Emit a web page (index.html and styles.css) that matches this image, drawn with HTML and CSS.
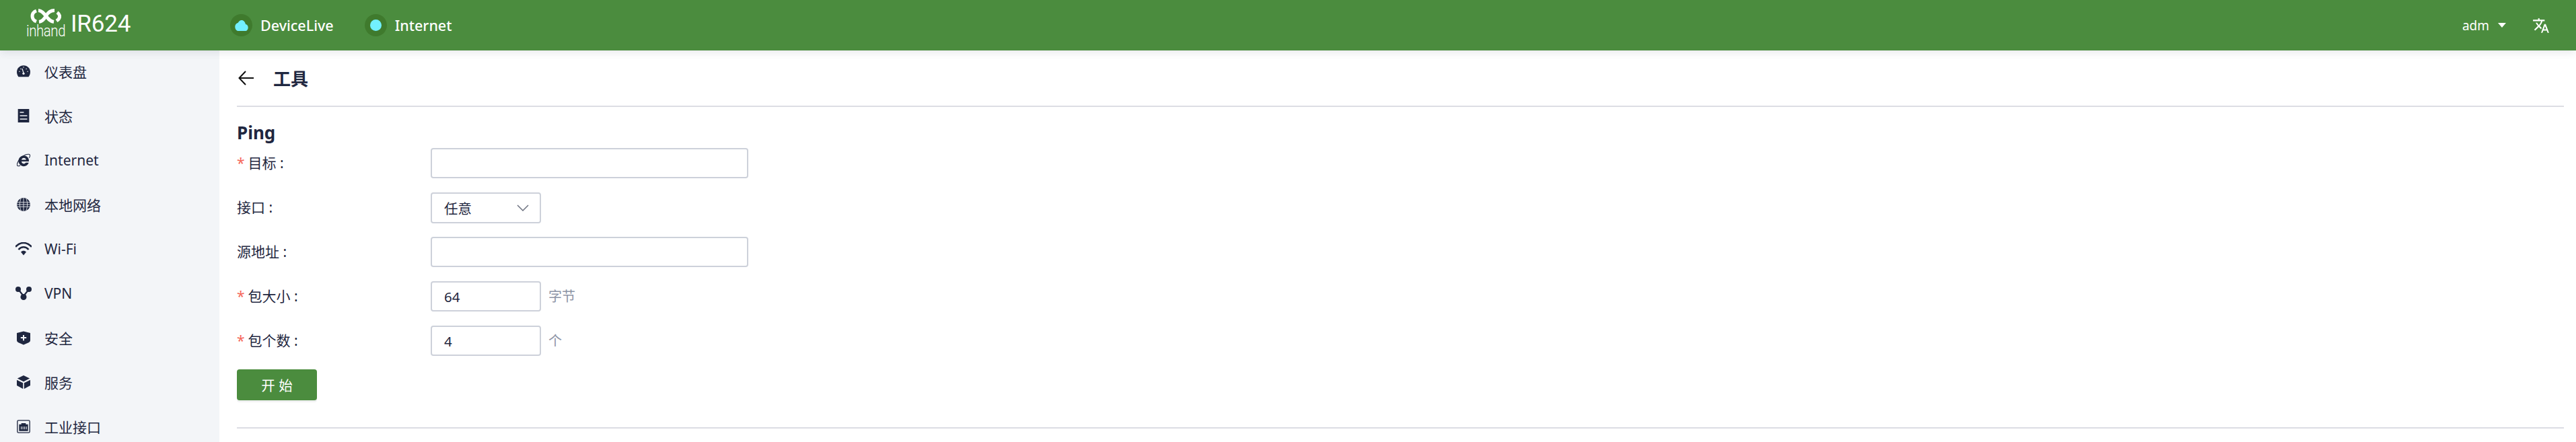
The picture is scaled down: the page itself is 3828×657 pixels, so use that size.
FILE: index.html
```html
<!DOCTYPE html>
<html lang="zh-CN">
<head>
  <meta charset="UTF-8">
  <title>IR624</title>
  <link rel="stylesheet" href="styles.css">
</head>
<body>
  <header class="topbar">
    <div class="logo">
      <div class="logo-mark">
        <svg class="logo-loop" viewBox="0 0 46 22" width="46" height="22">
          <path d="M9 3C1 6 1 16 9 19"/>
          <path d="M12 2.500C22 3 24 18 35 19.500"/>
          <path d="M13 19.500C18 19 21 15 23.500 10.500C26 6 30 2.500 36 2.500"/>
          <path d="M40 5.500C45 9 45 14 39 18"/>
        </svg>
        <span class="logo-word">inhand</span>
      </div>
      <span class="logo-model">IR624</span>
    </div>

    <nav class="status-nav">
      <div class="status-item">
        <span class="status-dot">
          <svg viewBox="0 0 24 24" width="22" height="22"><path d="M19.35 10.04C18.67 6.59 15.64 4 12 4 9.11 4 6.6 5.64 5.35 8.04 2.34 8.36 0 10.91 0 14c0 3.31 2.69 6 6 6h13c2.76 0 5-2.24 5-5 0-2.64-2.05-4.78-4.65-4.96z" transform="translate(12 12) scale(.88 1.1) translate(-12 -12)"/></svg>
        </span>
        <span>DeviceLive</span>
      </div>
      <div class="status-item">
        <span class="status-dot"><i class="status-led"></i></span>
        <span>Internet</span>
      </div>
    </nav>

    <div class="topbar-right">
      <span class="user">adm</span>
      <i class="caret"></i>
      <svg class="lang" viewBox="0 0 24 24" width="26" height="26"><path d="M12.87 15.07l-2.54-2.51.03-.03c1.74-1.94 2.98-4.17 3.71-6.53H17V4h-7V2H8v2H1v1.99h11.17C11.5 7.92 10.4 9.75 9 11.3 8.09 10.29 7.33 9.18 6.69 8h-2c.73 1.63 1.73 3.17 2.98 4.56l-5.09 5.02L4 19l5-5 3.11 3.11.76-2.04zM18.5 10h-2L12 22h2l1.12-3h4.75L21 22h2l-4.5-12zm-2.62 7l1.62-4.33L19.12 17h-3.24z" fill="#fff"/></svg>
    </div>
  </header>

  <div class="layout">
    <aside class="sidebar">
      <a class="menu-item">
        <svg class="menu-icon" viewBox="0 0 24 24"><path d="M12 1.500C5 1.500 0 7 0 13c0 3.500 1 6.500 3 9h18c2-2.500 3-5.500 3-9 0-6-5-11.500-12-11.500z"/><path d="M12 15l-2.500-8M4 12.500h1.500M6.500 7l1.200 1.200M12 4v1.500M17.500 7l-1.200 1.200M18.500 12.500H20" stroke="#f3f5f8" stroke-width="1.500" fill="none"/><circle cx="12" cy="16" r="2" fill="#f3f5f8"/></svg>
        <span>仪表盘</span>
      </a>
      <a class="menu-item">
        <svg class="menu-icon" viewBox="0 0 24 24"><path d="M2 0h20v24H2z"/><path d="M5.500 6h7M5.500 12h13M5.500 18h13" stroke="#f3f5f8" stroke-width="2"/></svg>
        <span>状态</span>
      </a>
      <a class="menu-item">
        <svg class="menu-icon" viewBox="0 0 24 24"><path fill-rule="evenodd" d="M12.500 4C7 4 3 8.500 3 13.500S7 23 12.500 23c4 0 7.500-2.300 8.800-6.500h-5.500c-.8 1.300-2 2-3.300 2-2.200 0-4-1.600-4.200-4h13.300c.6-6-3.600-10.500-9.100-10.500zM8.400 11.500c.3-2 2-3.400 4.100-3.400s3.800 1.400 4.100 3.400z"/><path d="M6 21.500C2 23.500-.5 22.500.8 18 2.500 12 9 5 15.500 2.500 20 .8 24 1 23.500 4.500c-.2 1-.7 2.200-1.500 3.500" fill="none" stroke-width="1.300"/></svg>
        <span>Internet</span>
      </a>
      <a class="menu-item">
        <svg class="menu-icon" viewBox="0 0 24 24"><circle cx="12" cy="12" r="12"/><path d="M0 8h24M0 12h24M0 16h24M12 0v24M7.500 1c-3 7-3 15 0 22M16.500 1c3 7 3 15 0 22" fill="none" stroke="#f3f5f8" stroke-width="1"/></svg>
        <span>本地网络</span>
      </a>
      <a class="menu-item">
        <svg class="menu-icon wide" viewBox="0 0 24 20"><path d="M0 7C7-1 17-1 24 7" fill="none" stroke-width="2.600"/><path d="M4.500 11c4.500-5 10.500-5 15 0" fill="none" stroke-width="2.600"/><path d="M8 14.500c2.500-2.500 5.500-2.500 8 0l-4 5z"/></svg>
        <span>Wi-Fi</span>
      </a>
      <a class="menu-item">
        <svg class="menu-icon wide" viewBox="0 0 24 20"><path d="M4 4l8 10 8-10" fill="none" stroke-width="2.200"/><circle cx="4" cy="4" r="4"/><circle cx="20" cy="4" r="4"/><circle cx="12" cy="15.500" r="4.500"/></svg>
        <span>VPN</span>
      </a>
      <a class="menu-item">
        <svg class="menu-icon tall" viewBox="0 0 24 24"><path d="M12 0l12 3v13c0 2-1 3-3 4l-9 4-9-4c-2-1-3-2-3-4V3z"/><path d="M12 6.500v10M7 11.500h10" stroke="#f3f5f8" stroke-width="2.400"/></svg>
        <span>安全</span>
      </a>
      <a class="menu-item">
        <svg class="menu-icon" viewBox="0 0 24 24"><path d="M12 0l11 5.500L12 11 1 5.500z"/><path d="M0 8l11 5.500V24L0 18z"/><path d="M24 8l-11 5.500V24l11-6z"/></svg>
        <span>服务</span>
      </a>
      <a class="menu-item">
        <svg class="menu-icon" viewBox="0 0 24 24"><rect x="1" y="1" width="22" height="22" rx="2" fill="none" stroke-width="1.600"/><path d="M4 8h4V6h8v2h4v12H4z"/><path d="M8 12v5M11 12v5M14 12v5M17 12v5" stroke="#f3f5f8" stroke-width="1.200"/></svg>
        <span>工业接口</span>
      </a>
    </aside>

    <main class="content">
      <div class="page-head">
        <svg class="back" viewBox="0 0 24 22" width="24" height="22"><path d="M23 11H2M11 1L1.500 11 11 21" fill="none" stroke="#111" stroke-width="2"/></svg>
        <h1>工具</h1>
      </div>

      <section class="ping">
        <h2>Ping</h2>
        <form class="ping-form">
          <div class="form-row">
            <label class="form-label"><b>*</b>目标 :</label>
            <input class="text-input" type="text">
          </div>
          <div class="form-row">
            <label class="form-label">接口 :</label>
            <div class="select-box">
              <span>任意</span>
              <svg viewBox="0 0 18 10" width="18" height="10"><path d="M1 1l8 8 8-8" fill="none" stroke="#6d7280" stroke-width="1.500"/></svg>
            </div>
          </div>
          <div class="form-row">
            <label class="form-label">源地址 :</label>
            <input class="text-input" type="text">
          </div>
          <div class="form-row">
            <label class="form-label"><b>*</b>包大小 :</label>
            <input class="text-input short" type="text" value="64">
            <span class="unit">字节</span>
          </div>
          <div class="form-row">
            <label class="form-label"><b>*</b>包个数 :</label>
            <input class="text-input short" type="text" value="4">
            <span class="unit">个</span>
          </div>
          <button class="start-btn" type="button">开 始</button>
        </form>
      </section>
      <div class="rule"></div>
    </main>
  </div>
</body>
</html>
```

FILE: styles.css
```css
* {
  box-sizing: border-box;
}

html,
body {
  margin: 0;
  height: 100%;
  overflow: hidden;
}

body {
  background-color: #fff;
  color: #1f2740;
  font-family: "Noto Sans", "Noto Sans CJK SC", sans-serif;
  font-size: 20px;
}

.topbar {
  position: relative;
  z-index: 2;
  display: flex;
  align-items: center;
  height: 75px;
  padding: 0 39px 0 40px;
  background-color: #4b8c3e;
  color: #fff;
  box-shadow: 0 2px 12px rgba(31, 39, 64, 0.12);
}

.logo {
  display: flex;
  align-items: center;
  width: 302px;
  padding-bottom: 4px;
}

.logo-mark {
  display: flex;
  flex-direction: column;
  align-items: center;
  width: 56px;
  margin-right: 9px;
}

.logo-loop {
  fill: none;
  stroke: #fff;
  stroke-width: 5;
}

.logo-word {
  font-family: Roboto, sans-serif;
  font-size: 24px;
  font-weight: 300;
  line-height: 23px;
  letter-spacing: -0.5px;
  transform: scaleX(0.85);
}

.logo-model {
  font-family: Roboto, sans-serif;
  font-size: 35px;
  font-weight: 400;
  letter-spacing: -0.2px;
}

.status-nav {
  display: flex;
  gap: 46px;
  font-size: 21.500px;
  font-weight: 500;
}

.status-item {
  display: flex;
  align-items: center;
  gap: 12px;
}

.status-dot {
  display: flex;
  align-items: center;
  justify-content: center;
  width: 33px;
  height: 33px;
  border-radius: 50%;
  background-color: #3f7a2d;
  fill: #72f0ff;
}

.status-led {
  width: 17px;
  height: 17px;
  border-radius: 50%;
  background-color: #72f0ff;
}

.topbar-right {
  display: flex;
  align-items: center;
  margin-left: auto;
}

.user {
  font-size: 19px;
}

.caret {
  width: 0;
  height: 0;
  margin: 0 39px 0 13px;
  border-top: 7px solid #fff;
  border-left: 6px solid transparent;
  border-right: 6px solid transparent;
}

.layout {
  display: flex;
  height: 582px;
  overflow: hidden;
}

.sidebar {
  flex: none;
  width: 326px;
  padding-top: 1px;
  margin-top: -3px;
  background-color: #f3f5f8;
}

.menu-item {
  display: flex;
  align-items: center;
  height: 66px;
  padding-left: 25px;
  font-size: 21px;
}

.menu-icon {
  flex: none;
  width: 20px;
  height: 20px;
  margin-right: 21px;
  fill: #1f2740;
  stroke: #1f2740;
  stroke-width: 0;
}

.menu-icon.wide {
  width: 24px;
  margin-left: -2px;
  margin-right: 19px;
}

.menu-icon.tall {
  height: 23px;
}

.content {
  flex: 1;
  padding: 0 18px 0 26px;
}

.page-head {
  display: flex;
  align-items: center;
  height: 84px;
  border-bottom: 2px solid #dcdde4;
}

.back {
  margin: 0 28px 0 2px;
}

h1 {
  margin: 0;
  font-size: 26px;
  font-weight: 700;
}

h2 {
  margin: 0;
  height: 61px;
  padding-top: 20px;
  font-size: 26px;
  line-height: 36px;
  font-weight: 700;
}

.form-row {
  display: flex;
  align-items: center;
  height: 45px;
  margin-bottom: 21px;
}

.form-label {
  flex: none;
  width: 288px;
  padding-bottom: 3px;
  font-size: 21px;
}

.form-label b {
  margin-right: 5px;
  color: #f5675a;
  font-weight: 400;
}

.text-input {
  width: 472px;
  height: 45px;
  padding: 0 18px;
  border: 2px solid #cdd1da;
  border-radius: 4px;
  background-color: #fff;
  color: #1f2740;
  font: inherit;
  font-size: 20.500px;
}

.text-input.short {
  width: 164px;
}

.select-box {
  display: flex;
  align-items: center;
  justify-content: space-between;
  width: 164px;
  height: 46px;
  padding: 0 16px 0 18px;
  border: 2px solid #cdd1da;
  border-radius: 4px;
  font-size: 20.500px;
}

.unit {
  margin-left: 11px;
  padding-bottom: 3px;
  color: #8d94a6;
}

.start-btn {
  display: block;
  width: 119px;
  height: 46px;
  margin-top: -1px;
  padding: 0;
  border: 0;
  border-radius: 4px;
  background-color: #4b8c3e;
  color: #fff;
  font: inherit;
  font-size: 20.500px;
  box-shadow: 0 3px 0 #f1f2f3;
}

.rule {
  margin-top: 40px;
  height: 2px;
  background-color: #dcdde4;
}
```
